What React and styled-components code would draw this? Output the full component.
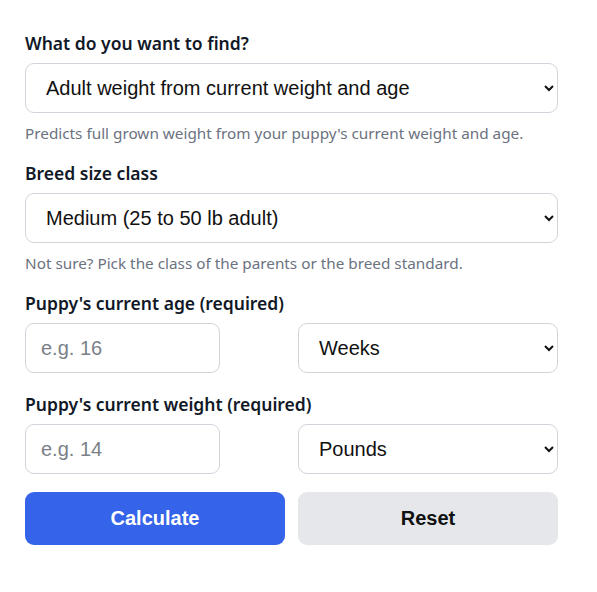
import React from 'react';
import styled, { createGlobalStyle } from 'styled-components';

const GlobalStyle = createGlobalStyle`
  body {
    margin: 0;
    background: #ffffff;
    font-family: "Noto Sans", "Liberation Sans", sans-serif;
    color: #111827;
  }
`;

const Form = styled.form`
  width: 533px;
  padding: 31px 0 0 25px;
`;

const Field = styled.div`
  margin-bottom: ${(p) => (p.$tight ? '18px' : '19px')};
`;

const Label = styled.label`
  display: block;
  font-size: 17.5px;
  font-weight: 600;
  line-height: 24px;
  margin-bottom: 8px;
  color: #111827;
`;

const Select = styled.select`
  display: block;
  width: 100%;
  height: 50px;
  padding: 0 14px 0 16px;
  border: 1px solid #d1d5db;
  border-radius: 9px;
  background: #ffffff;
  font-family: "Liberation Sans", Arial, sans-serif;
  font-size: 20px;
  color: #111111;
  box-sizing: border-box;
`;

const Input = styled.input`
  display: block;
  width: 195px;
  height: 50px;
  padding: 0 15px;
  border: 1px solid #d1d5db;
  border-radius: 9px;
  background: #ffffff;
  font-family: "Liberation Sans", Arial, sans-serif;
  font-size: 20px;
  color: #111111;
  box-sizing: border-box;
  &::placeholder {
    color: #7b7f87;
  }
`;

const Hint = styled.p`
  margin: 10px 0 0;
  font-size: 15.3px;
  line-height: 20px;
  color: #6b7280;
`;

const Row = styled.div`
  display: grid;
  grid-template-columns: 1fr 1fr;
  gap: 13px;
`;

const Button = styled.button`
  height: 53px;
  border: 0;
  border-radius: 9px;
  font-family: "Liberation Sans", Arial, sans-serif;
  font-size: 20px;
  font-weight: 700;
  cursor: pointer;
  background: ${(p) => (p.$primary ? '#3563e9' : '#e5e7eb')};
  color: ${(p) => (p.$primary ? '#ffffff' : '#111111')};
`;

export default function App() {
  return (
    <>
      <GlobalStyle />
      <Form onSubmit={(e) => e.preventDefault()}>
        <Field $tight>
          <Label>What do you want to find?</Label>
          <Select defaultValue="adult">
            <option value="adult">Adult weight from current weight and age</option>
          </Select>
          <Hint>Predicts full grown weight from your puppy's current weight and age.</Hint>
        </Field>
        <Field $tight>
          <Label>Breed size class</Label>
          <Select defaultValue="medium">
            <option value="medium">Medium (25 to 50 lb adult)</option>
          </Select>
          <Hint>Not sure? Pick the class of the parents or the breed standard.</Hint>
        </Field>
        <Field>
          <Label>Puppy's current age (required)</Label>
          <Row>
            <Input placeholder="e.g. 16" />
            <Select defaultValue="weeks">
              <option value="weeks">Weeks</option>
            </Select>
          </Row>
        </Field>
        <Field $tight>
          <Label>Puppy's current weight (required)</Label>
          <Row>
            <Input placeholder="e.g. 14" />
            <Select defaultValue="pounds">
              <option value="pounds">Pounds</option>
            </Select>
          </Row>
        </Field>
        <Row>
          <Button type="submit" $primary>Calculate</Button>
          <Button type="button">Reset</Button>
        </Row>
      </Form>
    </>
  );
}
